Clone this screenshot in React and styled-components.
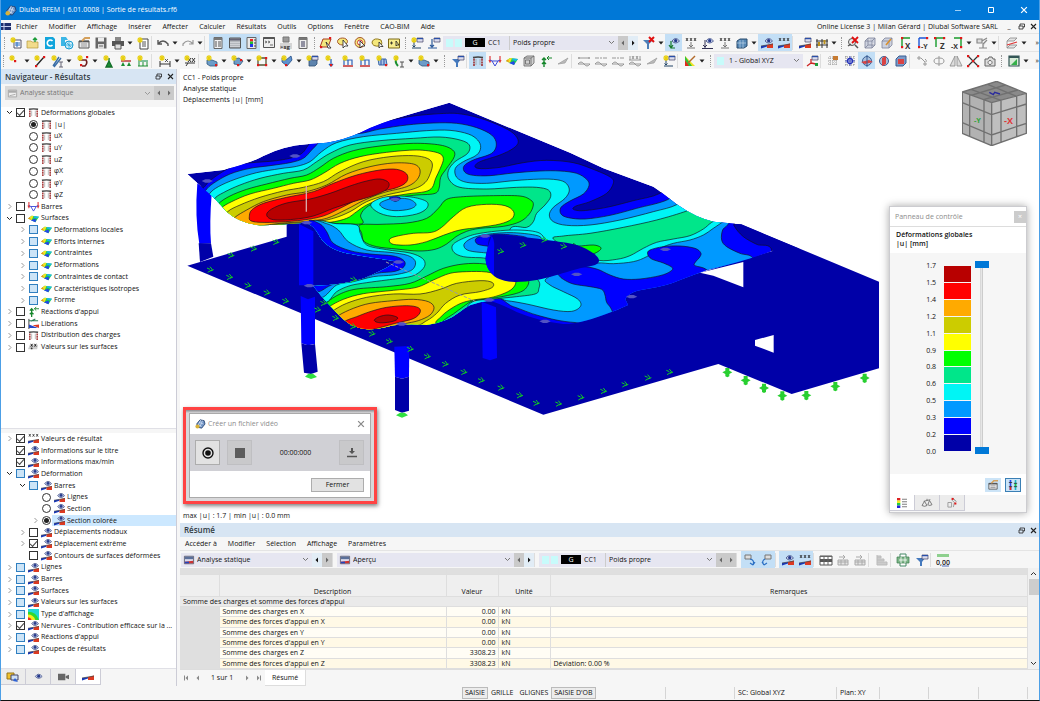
import React from 'react';
import styled, { createGlobalStyle, css } from 'styled-components';

const GlobalStyle = createGlobalStyle`
    * {
        box-sizing: border-box;
    }
    body {
        margin: 0;
        font-family: "Open Sans", "Noto Sans", sans-serif;
        font-size: 7px;
        font-weight: 500;
        line-height: 10px;
        color: #111;
    }
    button, select, input {
        margin: 0;
        padding: 0;
        font: inherit;
        color: inherit;
    }
`;

const Window = styled.div`
    display: flex;
    flex-direction: column;
    height: 100vh;
    overflow: hidden;
    background: #f6f6f6;
    border: solid #4c9fe6;
    border-width: 0 1px;
    border-bottom: 1px solid #111;
`;

const TitleBar = styled.header`
    display: flex;
    align-items: center;
    gap: 3px;
    height: 20px;
    padding-left: 4px;
    flex-shrink: 0;
    background: #0078d7;
    color: white;
`;

const Spacer = styled.div`
    flex: 1;
`;

const WindowButton = styled.button`
    display: grid;
    place-items: center;
    flex-shrink: 0;
    width: ${({ $small }) => ($small ? '12px' : '30px')};
    height: ${({ $small }) => ($small ? '10px' : '20px')};
    border: none;
    background: transparent;
`;

const DocumentButtons = styled.div`
    display: flex;
    margin-left: -6px;
`;

const MenuBar = styled.nav`
    display: flex;
    align-items: center;
    flex-shrink: 0;
    gap: ${({ $gap }) => $gap || '11px'};
    height: 13px;
    padding-left: ${({ $inset }) => $inset || '0'};
    white-space: nowrap;
`;

const MenuItem = styled.button`
    border: none;
    background: transparent;
`;

const Flag = styled.svg`
    width: 10px;
    height: 7px;
    margin-right: -6px;
`;

const ToolRow = styled.div`
    display: flex;
    align-items: center;
    flex-shrink: 0;
    height: 18px;
    border-top: 1px solid #e4e4e4;
    overflow: hidden;
`;

const ToolButton = styled.button`
    display: grid;
    place-items: center;
    flex-shrink: 0;
    width: 17px;
    height: 17px;
    border: none;
    background: ${({ $active }) => ($active ? '#c3dff6' : 'transparent')};
`;

const CaretButton = styled.button`
    display: grid;
    place-items: center;
    flex-shrink: 0;
    width: 8px;
    height: 16px;
    border: none;
    background: transparent;
`;

const Gap = styled.span`
    flex-shrink: 0;
    width: ${({ $width }) => $width}px;
    height: 14px;
    border-left: ${({ $line }) => ($line ? '1px solid #ddd' : 'none')};
`;

const Grip = styled.span`
    flex-shrink: 0;
    width: ${({ $width }) => $width}px;
    height: 14px;
    display: grid;
    place-items: center;
    &::before {
        content: '';
        height: 12px;
        border-left: 1px dotted #999;
    }
`;

const Combo = styled.div`
    display: flex;
    align-items: center;
    flex-shrink: 0;
    width: ${({ $width }) => $width};
    height: 14px;
    padding: 0 3px;
    gap: 3px;
    background: ${({ $muted }) => ($muted ? '#d9d9d9' : '#e6e6f1')};
    color: ${({ $muted }) => ($muted ? '#777' : '#111')};
`;

const Select = styled.select`
    flex: 1;
    min-width: 0;
    appearance: none;
    border: none;
    background: transparent;
    opacity: 1;
    &:disabled {
        color: #777;
    }
`;

const Swatch = styled.span`
    width: 7px;
    height: 8px;
    background: #c8fbfb;
    margin-right: ${({ $end }) => ($end ? '2px' : '-1px')};
`;

const CaseTag = styled.span`
    width: 20px;
    height: 9px;
    background: black;
    color: white;
    text-align: center;
    line-height: 9px;
    margin-left: -2px;
`;

const CaseName = styled.span`
    width: 22px;
    height: 14px;
    line-height: 14px;
    border-right: 1px solid #ccc;
`;

const StepButton = styled.button`
    display: grid;
    place-items: center;
    flex-shrink: 0;
    width: 10px;
    height: 14px;
    border: none;
    background: ${({ $dim }) => ($dim ? '#cacaca' : '#e2edf6')};
`;

const Body = styled.div`
    display: flex;
    flex: 1;
    min-height: 0;
`;

const Navigator = styled.aside`
    display: flex;
    flex-direction: column;
    width: 176px;
    flex-shrink: 0;
    border-right: 1px solid #ccccd6;
`;

const PanelTitle = styled.h2`
    display: flex;
    align-items: center;
    flex-shrink: 0;
    height: ${({ $height }) => $height};
    margin: 0;
    padding-left: 4px;
    background: #d7e5f3;
    color: #333c44;
    font-size: 8px;
    font-weight: 600;
`;

const ComboRow = styled.div`
    display: flex;
    padding: 2px 2px 7px 4px;
`;

const TreePane = styled.div`
    flex: ${({ $grow }) => ($grow ? '1' : 'none')};
    padding: 0 0 ${({ $grow }) => ($grow ? '0' : '13px')} 3px;
    margin-bottom: ${({ $grow }) => ($grow ? '4px' : '0')};
    background: white;
    min-height: 0;
    border-bottom: 1px solid #e0e0e6;
`;

const Tree = styled.ul`
    display: grid;
    grid-template-columns: minmax(0, 1fr);
    grid-auto-rows: 1fr;
    height: ${({ $height }) => $height};
    margin: 0;
    padding: 0;
    list-style: none;
`;

const TreeRow = styled.li`
    display: flex;
    align-items: center;
    min-height: 0;
    padding-left: ${({ $level }) => $level * 13}px;
`;

const Twisty = styled.button`
    display: grid;
    place-items: center;
    flex-shrink: 0;
    width: 10px;
    height: 10px;
    margin-right: 2px;
    border: none;
    background: transparent;
`;

const Tick = styled.input`
    appearance: none;
    flex-shrink: 0;
    display: grid;
    place-items: center;
    width: 9px;
    height: 9px;
    border: 1px solid ${({ $mixed }) => ($mixed ? '#2f7fc0' : '#333')};
    border-radius: ${({ type }) => (type === 'radio' ? '50%' : '0')};
    background: ${({ $mixed }) => ($mixed ? '#cce4f7' : 'white')};
    ${({ type }) =>
        type === 'radio'
            ? css`
                  &:checked::after {
                      content: '';
                      width: 5px;
                      height: 5px;
                      border-radius: 50%;
                      background: #222;
                  }
              `
            : css`
                  &:checked::after {
                      content: '';
                      width: 6px;
                      height: 3px;
                      margin-bottom: 2px;
                      border: solid #444;
                      border-width: 0 0 1px 1px;
                      transform: rotate(-48deg);
                  }
              `}
`;

const TreeLabel = styled.label`
    display: flex;
    align-items: center;
    gap: 2px;
    flex: 1;
    min-width: 0;
    height: 11px;
    margin-left: 1px;
    padding-left: 2px;
    white-space: nowrap;
    background: ${({ $selected }) => ($selected ? '#cce8ff' : 'transparent')};
    svg {
        flex-shrink: 0;
    }
`;

const NavTabs = styled.div`
    display: flex;
    height: 17px;
    flex-shrink: 0;
`;

const NavTab = styled.button`
    display: grid;
    place-items: center;
    width: 25px;
    height: 16px;
    border: solid #ccccd6;
    border-width: 0 1px 1px 0;
    background: ${({ $active }) => ($active ? 'white' : '#ececec')};
`;

const Main = styled.main`
    display: flex;
    flex-direction: column;
    flex: 1;
    min-width: 0;
    margin-left: 3px;
`;

const Viewport = styled.section`
    position: relative;
    flex: 1;
    min-height: 0;
    background: white;
`;

const Model = styled.svg`
    display: block;
    width: 100%;
    height: 100%;
`;

const Caption = styled.p`
    position: absolute;
    left: 3px;
    ${({ $bottom }) => ($bottom ? 'bottom: 2px;' : 'top: 3px;')}
    margin: 0;
    line-height: 11px;
`;

const Cube = styled.svg`
    position: absolute;
    top: 12px;
    right: 12px;
    width: 65px;
    height: 65px;
`;

const ControlPanel = styled.section`
    position: absolute;
    top: 137px;
    right: 12px;
    width: 138px;
    background: #f6f6f6;
    border: 1px solid #ccccd0;
    box-shadow: 0 0 8px rgba(0, 0, 0, 0.35);
`;

const ControlTitle = styled.h2`
    display: flex;
    align-items: center;
    justify-content: space-between;
    height: 20px;
    margin: 0;
    padding-left: 5px;
    background: white;
    border-bottom: 1px solid #ddd;
    color: #8c8c8c;
    font-size: 7px;
    font-weight: 500;
`;

const DimClose = styled.button`
    width: 12px;
    height: 12px;
    border: none;
    background: #ccc;
    color: white;
    line-height: 10px;
`;

const ControlHead = styled.div`
    height: 26px;
    padding: 3px 6px;
    background: white;
    font-weight: 600;
    line-height: 9px;
`;

const Legend = styled.div`
    display: flex;
    height: 221px;
    padding-top: 8px;
    padding-left: 26px;
`;

const ScaleValues = styled.ol`
    display: flex;
    flex-direction: column;
    justify-content: space-between;
    width: 20px;
    height: 196px;
    margin: 0;
    padding: 0;
    list-style: none;
    text-align: right;
`;

const ScaleBars = styled.div`
    display: grid;
    grid-auto-rows: 1fr;
    gap: 1px;
    width: 27px;
    height: 185px;
    margin: 5px 4px 0 8px;
`;

const ScaleBar = styled.span`
    background: ${({ $color }) => $color};
`;

const Sliders = styled.div`
    display: grid;
    width: 14px;
    height: 193px;
    background: linear-gradient(90deg, transparent 5px, #ccc 5px, #e6e6e6 6px, #e6e6e6 7px, #ccc 7px, #ccc 8px, transparent 8px);
`;

const Slider = styled.input`
    grid-area: 1 / 1;
    appearance: none;
    writing-mode: vertical-lr;
    direction: rtl;
    width: 14px;
    height: 193px;
    background: transparent;
    pointer-events: none;
    &::-webkit-slider-thumb {
        appearance: none;
        width: 14px;
        height: 7px;
        background: #0078d7;
        pointer-events: auto;
    }
`;

const ControlActions = styled.div`
    display: flex;
    justify-content: flex-end;
    align-items: center;
    gap: 4px;
    height: 21px;
    padding-right: 5px;
    background: white;
`;

const ControlAction = styled.button`
    display: grid;
    place-items: center;
    width: 16px;
    height: 14px;
    border: ${({ $framed }) => ($framed ? '1px solid #3a7fb5' : 'none')};
    background: #cce4f7;
`;

const Callout = styled.div`
    position: absolute;
    left: 3px;
    bottom: 19px;
    width: 194px;
    padding: 3px;
    border: 3px solid #ff4343;
    background: linear-gradient(#8c8c90, #d8d8da 3px, #d8d8da);
    box-shadow: 1px 2px 4px rgba(0, 0, 0, 0.5);
`;

const Dialog = styled.section`
    background: white;
    border: 1px solid #aaa;
`;

const DialogTitle = styled.h2`
    display: flex;
    align-items: center;
    gap: 3px;
    height: 20px;
    margin: 0;
    padding: 0 3px 0 5px;
    color: #8c8c8c;
    font-size: 7px;
    font-weight: 500;
`;

const Recorder = styled.div`
    display: flex;
    align-items: center;
    gap: 7px;
    height: 37px;
    padding: 0 6px 0 5px;
    background: #d0d0d5;
`;

const RecordButton = styled.button`
    display: grid;
    place-items: center;
    width: 25px;
    height: 25px;
    border: 1px solid ${({ disabled }) => (disabled ? '#bfbfc2' : '#adadad')};
    background: ${({ disabled }) => (disabled ? '#c9c9cb' : '#e2e2e2')};
`;

const Clock = styled.output`
    flex: 1;
    text-align: center;
`;

const DialogFooter = styled.div`
    display: flex;
    justify-content: flex-end;
    padding: 7px 6px 5px;
`;

const CloseButton = styled.button`
    width: 53px;
    height: 14px;
    border: 1px solid #adadad;
    background: #e2e2e2;
`;

const Summary = styled.section`
    display: flex;
    flex-direction: column;
    flex-shrink: 0;
`;

const TableArea = styled.div`
    display: flex;
    height: 102px;
    border-bottom: 1px solid #ddd;
`;

const Table = styled.table`
    flex: 1;
    height: 101px;
    border-collapse: collapse;
    table-layout: fixed;
    background: #fffbf0;
    th, td {
        padding: 0 3px;
        border: solid #dedede;
        border-width: 0 1px 1px 0;
        line-height: 9px;
        white-space: nowrap;
        font-weight: 500;
        text-align: left;
    }
    thead th {
        height: 22px;
        background: #efefef;
        text-align: center;
        vertical-align: bottom;
    }
`;

const StripRow = styled.tr`
    && td {
        height: 6px;
        background: #dfdfdf;
        line-height: 4px;
    }
`;

const GroupRow = styled.tr`
    && th {
        background: #eaeaea;
    }
`;

const DataRow = styled.tr`
    background: ${({ $alt }) => ($alt ? '#fff9e6' : '#fffdf5')};
    && td:first-child {
        background: #dfdfdf;
        border-bottom-color: #dfdfdf;
    }
    && td:nth-child(3) {
        text-align: right;
        padding-right: 2px;
    }
`;

const ScrollBar = styled.div`
    display: flex;
    flex-direction: column;
    align-items: center;
    width: 11px;
    background: #f1f1f1;
`;

const ScrollButton = styled.button`
    display: grid;
    place-items: center;
    width: 11px;
    height: 11px;
    border: none;
    background: transparent;
`;

const ScrollThumb = styled.div`
    width: 10px;
    height: 16px;
    background: #cdcdcd;
`;

const Pager = styled.div`
    display: flex;
    align-items: center;
    height: 16px;
    padding-left: 1px;
`;

const PageCount = styled.span`
    padding: 0 8px;
`;

const SheetTab = styled.button`
    align-self: flex-start;
    width: 41px;
    height: 16px;
    margin-left: 2px;
    border: solid #ddd;
    border-width: 0 1px 1px 0;
    background: white;
`;

const StatusBar = styled.footer`
    display: flex;
    align-items: center;
    flex-shrink: 0;
    height: 14px;
    padding-left: 461px;
    white-space: nowrap;
`;

const StatusToggle = styled.button`
    height: 12px;
    padding: 0 2px;
    border: 1px solid ${({ $on }) => ($on ? '#bbb' : 'transparent')};
    background: ${({ $on }) => ($on ? '#ececec' : 'transparent')};
`;

const StatusCell = styled.span`
    width: ${({ $width }) => $width};
    height: 12px;
    padding-left: 3px;
    border-left: 1px solid #d5d5d5;
    line-height: 12px;
`;

const sun = <path d="M3 0v6M0 3h6M1 1l4 4M5 1l-4 4" stroke="#e8cf10" strokeWidth="1.200" />;
const win = <g><path d="M6 1h6v4h-6z" fill="#dde" stroke="#446" strokeWidth=".7" /><path d="M6 1h6v1.2h-6z" fill="#2a4fa8" /></g>;
const eye = <g><path d="M4 4q3.500-5 7.500 0q-4 4-7.500 0z" fill="#c3cdea" stroke="#4c5b8e" strokeWidth=".9" /><circle cx="7.700" cy="3.700" r="1.600" fill="#263a8c" /></g>;
const wedge = <g><path d="M0 11.500V9L6 8v1.500z" fill="#1838b8" /><path d="M6 8l6-1.500V11H6z" fill="#dc3a22" /><path d="M0 9L12 7" stroke="#444" strokeWidth=".7" /></g>;
const dots = <path d="M1 1l2 3M3 1L1 4M5 1l2 3M7 1L5 4M9 1l2 3M11 1L9 4" stroke="#222" strokeWidth=".8" />;
const node = (x, y) => <rect x={x} y={y} width="2.200" height="2.200" fill="#e01818" />;

const glyphs = {
    logo: <g><path d="M2 6l4-5 5 1 1 4-4 5-4-1z" fill="#6f93c5" stroke="#24406e" /><path d="M5 4l5 2M4 7l4 2M7 1l-3 6M9 2L6 9" stroke="#dfe9f7" strokeWidth=".8" /><circle cx="3" cy="9" r="2.500" fill="#d8b13a" /></g>,
    newModel: <g><path d="M4 3h7v8H4z" fill="#fff" stroke="#556" /><path d="M5 6h5M5 8h5M7 5v5" stroke="#2f6fc0" />{sun}</g>,
    open: <g><path d="M0 4h4l1 1h6v6H0z" fill="#f2dc8c" stroke="#b59a3a" strokeWidth=".7" /><path d="M8 5V1M6 3l2-2 2 2" fill="none" stroke="#1d9d3a" strokeWidth="1.400" /></g>,
    cloud: <g><path d="M1 0h8l2 2v10H1z" fill="#12a5dc" /><path d="M8.500 4a3 3 0 1 0 0 4" fill="none" stroke="#fff" strokeWidth="1.600" /></g>,
    globe: <g><path d="M0 0h5l2 3H0zM0 3h4v6H0z" fill="#3cb6e6" /><circle cx="8" cy="8" r="4" fill="#cdeefa" stroke="#1a9dd4" /><path d="M4 8h8M8 4v8M5.500 5.500l5 5" stroke="#1a9dd4" strokeWidth=".7" /></g>,
    card: <g><path d="M1 4h10v7H1z" fill="#e8e8ea" stroke="#555" /><path d="M1 4.500h10" stroke="#555" strokeWidth="1.600" /><path d="M3 7h6M3 9h6" stroke="#999" /><path d="M4 4L7 1h5" stroke="#d4a05c" strokeWidth="1.800" fill="none" /></g>,
    save: <g><path d="M.5.5h11v11H.5z" fill="#666" /><path d="M3 .5h6v4H3z" fill="#eee" /><path d="M3 7h6v5H3z" fill="#ddd" /><path d="M4 9h4" stroke="#666" /></g>,
    print: <g><path d="M3 0h6v4H3z" fill="#888" /><path d="M0 4h12v5H0z" fill="#555" /><path d="M3 7h6v5H3z" fill="#ddd" stroke="#555" /></g>,
    report: <g><path d="M3 2h8v10H3z" fill="#fff" stroke="#444" /><path d="M5 5h4M5 7h4M5 9h4" stroke="#555" />{sun}</g>,
    undo: <path d="M1 3v4h4M1 7q5-6 10 0v2" fill="none" stroke="#555" strokeWidth="1.400" />,
    redo: <path d="M11 3v4H7M11 7Q6 1 1 7v2" fill="none" stroke="#999" strokeWidth="1.200" />,
    panelL: <g><path d="M2 .5h8v11H2z" fill="#f2f2f2" stroke="#666" /><path d="M2 .5h8V3H2z" fill="#777" /><path d="M3 5h2M3 7h2M3 9h2M6 5h3M6 7h3M6 9h3" stroke="#555" /></g>,
    panelW: <g><path d="M.5 1h11v10H.5z" fill="#b4b8bd" stroke="#555" /><path d="M1 1.500h10v2H1z" fill="#667" /><path d="M1 5.500h10M1 7.500h10M1 9.500h10" stroke="#dfe3e8" strokeWidth=".6" /></g>,
    panelC: <g><path d="M1 .5h9v11H1z" fill="#e8e8e8" stroke="#666" /><path d="M4 2h3v2.500H4z" fill="#e22" /><path d="M4 4.500h3V7H4z" fill="#2b3" /><path d="M4 7h3v3H4z" fill="#23e" /><path d="M8 3h2M8 6h2M8 9h2" stroke="#444" /></g>,
    terminal: <g><path d="M.5.500h11v10H.5z" fill="#eee" stroke="#555" /><path d="M.5 1h11" stroke="#555" strokeWidth="2" /><path d="M2 4l2 1-2 1M5 4l2 1-2 1M7 8h3" fill="none" stroke="#333" strokeWidth=".7" /></g>,
    sg: <g><path d="M3 0h6v5H3z" fill="#999" stroke="#777" /><path d="M0 6h12v6H0z" fill="#d5d5d5" /><text x="0" y="11.500" fontSize="6" fontWeight="700" fill="#333">&gt;sg</text></g>,
    calc: <g><path d="M2 .5h8v11H2z" fill="#eee" stroke="#666" /><path d="M2 .5h8V3H2z" fill="#777" /><path d="M4 5h4M4 7h4M4 9h4" stroke="#335" /></g>,
    para: <g><path d="M3 2h8l-3 8H0z" fill="#f2e77e" stroke="#a83b20" />{node(0, 9)}{node(9, 0)}<path d="M6 5l5 6H8z" fill="#fff" stroke="#222" strokeWidth=".8" /></g>,
    lasso: <g><ellipse cx="5.500" cy="4.500" rx="5" ry="3.500" fill="#f5e87c" stroke="#a5552a" /><path d="M6 3v8l2-2h3z" fill="#fff" stroke="#222" strokeWidth=".8" /></g>,
    ringSel: <g><circle cx="6" cy="5.500" r="5" fill="#f5e87c" stroke="#a5552a" /><circle cx="6" cy="5.500" r="2.500" fill="#fff" stroke="#c33" /><path d="M6 4v7l2-2h3z" fill="#fff" stroke="#222" strokeWidth=".8" /></g>,
    blobSel: <g><path d="M1 5q2-5 9-2q2 5-1 6q-8 1-8-4z" fill="#f5e87c" stroke="#937a20" /><path d="M8 5v6l1.500-1.500H12z" fill="#fff" stroke="#222" strokeWidth=".8" /></g>,
    boxSel: <g><path d="M.5 2h11v9H.5z" fill="#f7ec8e" stroke="#7d6a1a" /><path d="M2 6h3M3.500 4.500v3M8 4v5l1-1h2z" stroke="#222" strokeWidth=".8" /></g>,
    loadNew: <g><path d="M1 11h9M3 5v5M1.500 8.500L3 10l1.500-1.500" fill="none" stroke="#246" />{sun}{win}</g>,
    load: <g><path d="M0 11h9M4 2v8M2 8l2 2 2-2" fill="none" stroke="#2d5b9b" strokeWidth="1.200" />{win}</g>,
    filterX: <g><path d="M0 3h10L6 7v5H4V7z" fill="#4d7fb8" /><path d="M6 0l5 5M11 0L6 5" stroke="#e01010" strokeWidth="2" /></g>,
    filter: <g><path d="M0 4h9L6 8v4H4V8z" fill="#4479bd" />{win}</g>,
    eyeSup: <g><path d="M3 4v7M1 8l2 3 2-3M3 11h4" fill="none" stroke="#177a2b" strokeWidth="1.200" />{eye}</g>,
    dotsSup: <g>{dots}<path d="M6 5v5M4 8l2 2 2-2M2 11h8" stroke="#777" fill="none" /></g>,
    eyeLoad: <g><path d="M3 3v8M1 8l2 2 2-2M0 11.500h11" fill="none" stroke="#335" />{eye}</g>,
    cubeEye: <g><path d="M1 4l3-2h7v7l-3 2H1z" fill="#5587b5" stroke="#2a4c6e" /><path d="M1 6h9M4 3v8M7 3v8" stroke="#cfe1f0" strokeWidth=".6" /></g>,
    eyeWedge: <g>{wedge}{eye}</g>,
    dotsWedge: <g>{wedge}{dots}</g>,
    wedge: <g transform="translate(0 -2)">{wedge}</g>,
    camera: <path d="M0 3h8v7H0zM8.500 5.500L12 4v5L8.500 7.500z" fill="#666" />,
    eyeOnly: <g transform="translate(-1.500 2)">{eye}</g>,
    winWedge: <g>{wedge}{win}</g>,
    fence: <g><path d="M0 4h12M0 8h12" stroke="#333" /><path d="M1 2v9M6 2v9M11 2v9" stroke="#333" /><path d="M3 5v4M8.500 3v4" stroke="#b98f1c" strokeWidth="2" /></g>,
    zoomX: <g><circle cx="5" cy="5" r="3.500" fill="#eee" stroke="#555" /><path d="M8 8l3 3M1 9l3-2" stroke="#555" strokeWidth="1.500" /><path d="M5 0l6 6M11 0L5 6" stroke="#e01010" strokeWidth="1.800" /></g>,
    box: <path d="M1 4l3-3h7v7l-3 3H1zM1 4h7v7M8 4l3-3M4 1v7h7M4 8l-3 3" fill="#cdd2df" stroke="#7d8499" strokeWidth=".8" />,
    boxPen: <g><path d="M1 4l3-3h7v7l-3 3H1zM1 4h7v7M8 4l3-3" fill="#cdd2df" stroke="#7d8499" strokeWidth=".8" /><path d="M5 8l5-6" stroke="#d98f2c" strokeWidth="1.600" /></g>,
    axX: <g><path d="M2 1v9M2 1h8" stroke="#189c2b" strokeWidth="1.400" />{node(1, 9)}{node(1, 0)}<text x="5" y="11.500" fontSize="8" fontWeight="700" fill="#333">X</text></g>,
    axY: <g><path d="M2 1v9M2 1h8" stroke="#1b57d8" strokeWidth="1.400" />{node(9, 0)}{node(1, 9)}<text x="4" y="11.500" fontSize="7" fontWeight="700" fill="#333">-Y</text></g>,
    axZ: <g><path d="M2 1v9M2 1h8" stroke="#189c2b" strokeWidth="1.400" />{node(0, 0)}{node(9, 0)}<text x="6" y="11.500" fontSize="8" fontWeight="700" fill="#333">Z</text></g>,
    axNX: <g><path d="M10 1v9M10 1H3" stroke="#189c2b" strokeWidth="1.400" />{node(9, 9)}{node(9, 0)}<text x="0" y="11.500" fontSize="7" fontWeight="700" fill="#333">-X</text></g>,
    work: <path d="M1 2h5v4H1zM6 4l5-3M3 11h8M7 11V7l4-4" fill="#ddd" stroke="#888" strokeWidth="1.200" />,
    isect: <g><path d="M1 4l3-3h7l-3 3zM1 11l3-3h7l-3 3zM1 4v7" fill="#e3e3e3" stroke="#888" strokeWidth=".8" /><path d="M1 8l10-3" stroke="#d33" strokeWidth="1.200" /></g>,
    newNode: <g transform="translate(1 0)">{sun}{node(5, 5)}</g>,
    newLine: <g><path d="M2 11L10 2" stroke="#222" strokeWidth="1.300" />{sun}{node(1, 10)}{node(9, 1)}</g>,
    newBar: <g><path d="M2 11L8 2M3 12l7-9" stroke="#3a6ea8" strokeWidth="1.400" /><path d="M8 7h4M10 7v5M8 12h4" stroke="#667" />{sun}</g>,
    polyline: <g><path d="M2 5h7q2 3-1 6H5" fill="none" stroke="#702020" strokeWidth="1.600" />{sun}{node(9, 1)}{node(3, 9)}</g>,
    support: <g><path d="M6 3v4M3 12l3-6 3 6z" fill="#1c8f33" stroke="#14702a" strokeWidth="1.400" />{sun}</g>,
    supports: <g><path d="M1 6h10" stroke="#b02020" strokeWidth="1.300" /><path d="M1 11l2-4 2 4zM7 11l2-4 2 4z" fill="#1c8f33" />{sun}</g>,
    elastic: <g><path d="M1 5h10v2H1z" fill="#7dbf9b" /><path d="M2 7v4M6 7v4M10 7v4M1 11h10" stroke="#1c8f33" />{sun}</g>,
    dimension: <g><path d="M1 9h10M1 6v6M11 6v6" stroke="#333" /><path d="M6 4l3 3M9 4L6 7" stroke="#333" strokeWidth=".8" />{sun}</g>,
    dimXX: <g><path d="M1 8h10M4 3l3 4M7 3L4 7M8 3l3 4M11 3L8 7M2 11l2-3" stroke="#333" fill="none" />{sun}</g>,
    plate: <g><path d="M1 5h5l5 2v4H4L1 9z" fill="#6d9cc8" stroke="#2e587e" strokeWidth=".8" />{sun}{node(9, 9)}</g>,
    polyPlate: <g><path d="M3 4l5-1 4 3-3 4-6-1z" fill="#6d9cc8" stroke="#2e587e" strokeWidth=".8" />{sun}{node(9, 4)}{node(6, 9)}</g>,
    opening: <g><path d="M2 3h8v7H2z" fill="none" stroke="#553" strokeWidth="1.300" />{node(1, 9)}{node(9, 9)}{node(9, 2)}{sun}</g>,
    shell: <g><path d="M1 3l4 2 5-4 1 4-5 6-5-4z" fill="#5c92d0" stroke="#234b85" strokeWidth=".8" />{sun}{node(4, 9)}</g>,
    solid: <g><path d="M3 5l2-2h6v6l-2 2H3z" fill="#5d83ad" stroke="#2e4f73" strokeWidth=".8" />{sun}{win}</g>,
    loadA: <g><path d="M6 4v7M4 9l2 2 2-2" stroke="#2c62b8" strokeWidth="1.300" fill="none" />{node(5, 9)}{sun}</g>,
    loadB: <g><path d="M1 11h10" stroke="#c02020" strokeWidth="1.400" /><path d="M2 5h8v5M6 5v5M2 5v5" stroke="#2c62b8" fill="none" strokeWidth="1.200" />{sun}</g>,
    loadC: <g><path d="M2 4h8l1 6H3z" fill="#a9c4e6" stroke="#3a67a8" /><path d="M5 4v6M8 4v6" stroke="#2c52a8" />{node(9, 9)}{sun}</g>,
    loadE: <g><path d="M4 2q-3 5 1 9" stroke="#1c8f33" strokeWidth="2" fill="none" /><path d="M7 7h4M9 7v5M7 12h4" stroke="#555" />{sun}</g>,
    frame: <g><path d="M2 11V3M10 11V3" stroke="#9c2424" strokeWidth="1.500" strokeDasharray="2 .6" /><path d="M4 10V4M8 10V4" stroke="#999" strokeWidth=".7" /><path d="M1 2.500q5-1 10 0" fill="none" stroke="#444" strokeWidth="1.500" /></g>,
    moment: <g><path d="M1 1v5M11 1v5M0 5l1 2 1-2M10 5l1 2 1-2" stroke="#e23a3a" fill="none" strokeWidth="1.200" /><path d="M1 5l2 1 3 5 3-5 2-1M3 6h6" fill="none" stroke="#3b48d8" /></g>,
    surface: <g><path d="M0 6l4-3 8 1-4 6z" fill="#1fcf4a" /><path d="M0 6l4-3 2 .3L4 8z" fill="#f2e422" /><path d="M7 3.400l5 .6-2 2-4-1z" fill="#18b5ee" /><path d="M3 8l5-2 1 2-1 2z" fill="#2347e8" /><path d="M0 6l2-1.500 1 2.500z" fill="#ef8a1d" /></g>,
    solidRes: <path d="M1 3l3-2h7v7l-3 3H1zM1 3h7v8M8 3l3-2M2.500 5h4v4h-4z" fill="#cfcfcf" stroke="#666" strokeWidth=".8" />,
    react: <g><path d="M4 12V3M2 5l2-2 2 2M2 9l2-2 2 2" stroke="#15862b" strokeWidth="1.400" fill="none" /><path d="M7 3h5M9 1L7 3l2 2" stroke="#15862b" fill="none" /></g>,
    slant: <path d="M1 9L11 3L8 8z" fill="#bbb" stroke="#999" strokeWidth=".7" />,
    beamA: <path d="M0 3h12M1 2v2M11 2v2M0 9q3-4 6 0t6 0M0 9h12" fill="none" stroke="#8d8d8d" strokeWidth=".9" />,
    beamB: <path d="M0 3h4M5 3h2M8 3h4M0 9q3-4 6 0t6 0M0 9h12" fill="none" stroke="#8d8d8d" strokeWidth=".9" />,
    beamC: <path d="M1 1v4M11 1v4M0 5h12M3 1l2 3M5 1L3 4M7 1l2 3M9 1L7 4M0 9q3-4 6 0t6 0M0 9h12" fill="none" stroke="#8d8d8d" strokeWidth=".9" />,
    release: <g><path d="M1 1v11" stroke="#333" /><path d="M1 3h10M3 3.500L8 1" stroke="#2a7d56" strokeWidth="1.200" /><path d="M1 7l10 4H1z" fill="#2446c8" /><path d="M5 8l7-1v4z" fill="#dc3a22" /></g>,
    values: <g><path d="M2 3h9L10 8H0z" fill="#ccc" /><path d="M3 2l2 3M5 2L3 5M7 2l2 3M9 2L7 5" stroke="#222" /><circle cx="4" cy="7" r="1" fill="#333" /></g>,
    rainbow: <g><path d="M0 0h12v12H0z" fill="#20d8d8" /><path d="M0 12V3Q9 3 12 12z" fill="#30d930" /><path d="M0 12V6q6 0 8 6z" fill="#f5ee1c" /><path d="M0 12V9q3 0 4 3z" fill="#ee2a1c" /></g>,
    palette: <g><path d="M1 1v10h10z" fill="#f0e224" /><path d="M1 1v4l3 6h4z" fill="#2ec23c" /><path d="M1 5v6h4z" fill="#e02a1c" /><path d="M4 8l7-7" stroke="#b26a2b" strokeWidth="1.400" /></g>,
    ucs: <g><path d="M5 8V4M5 8l5 1M5 8l-4 3" stroke="#c22" strokeWidth="1.300" /><path d="M9 8h3v3H9z" fill="#1c9c3a" />{win}</g>,
    raster: <g><path d="M1 3h10M1 6h10M1 9h10M3 1v10M6 1v10M9 1v10" stroke="#888" strokeWidth=".8" strokeDasharray="1 1" /><path d="M6 1h5v4H6z" fill="#c77b32" /></g>,
    snap: <g><path d="M1 2h10M1 10h10M2 1v10M10 1v10" stroke="#888" strokeDasharray="1 1" /><circle cx="6" cy="6" r="2.500" fill="none" stroke="#2230b8" strokeWidth="1.300" /><path d="M6 1v10M1 6h10" stroke="#2230b8" strokeWidth=".8" /></g>,
    planeA: <g><circle cx="6" cy="6" r="4.500" fill="#a9c0dd" stroke="#395f95" /><path d="M0 7l8-2 4 2-8 2z" fill="#d94343" /><path d="M6 0v12" stroke="#395f95" /></g>,
    planeB: <g><circle cx="6" cy="6" r="4.500" fill="#a9c0dd" stroke="#395f95" /><path d="M4 3l4-2v8l-4 2z" fill="#d94343" /></g>,
    planeC: <g><path d="M1 4l3-3h7v7l-3 3H1z" fill="#7d9ac6" stroke="#395f95" /><path d="M3 4h6v5H3z" fill="#d94343" /></g>,
    copyPts: <path d="M2 2h2v2H2zM5 3l4 4M8 8h2v2H8zM9 4q2 1 1 3" fill="none" stroke="#999" />,
    rotate: <path d="M1 6q0-3 5-3t5 3-5 3-5-3zM6 1v10" fill="none" stroke="#999" />,
    mirror: <path d="M5 1v10H0zM7 1v10h5z" fill="#ddd" stroke="#888" strokeWidth=".8" />,
    cross: <g><path d="M1 1l10 10M11 1L1 11" stroke="#333" strokeWidth="1.200" />{node(0, 0)}{node(10, 0)}{node(0, 10)}{node(10, 10)}{node(5, 5)}</g>,
    snapshot: <path d="M1 4h3l1-2h3l1 2h2v7H1zM6 5.500a2 2 0 1 0 .1 0z" fill="#ddd" stroke="#666" />,
    view: <g><path d="M1 1h10v10H1z" fill="#d7ead7" stroke="#355" strokeWidth="1.200" /><path d="M1 1h10v2H1z" fill="#355" /><path d="M3 10l6-6v6z" fill="#35b04a" /></g>,
    sheet: <g><path d="M0 2h12v9H0z" fill="#fff" stroke="#555" /><path d="M0 5h12v3H0z" fill="#555" /><path d="M0 2.500h12M4 2v9M8 2v9" stroke="#666" /></g>,
    sheetG: <g><path d="M1 6h10v5H1z" fill="#e4e4e4" stroke="#aaa" /><path d="M1 8h10M4 6v5M8 6v5M2 3h6M6 1l2 2-2 2" stroke="#aaa" fill="none" /></g>,
    bars: <path d="M1 1v10M1 2h4v2H1M1 5h7v2H1M1 8h10v3H1" fill="#ccc" stroke="#bbb" />,
    excel: <g><path d="M3 0h6v12H3z" fill="#fff" stroke="#486" /><path d="M0 3h12v6H0z" fill="#7cb487" stroke="#3b7d4b" strokeWidth=".7" /><path d="M2 6h8M4 3v6M8 3v6" stroke="#fff" strokeWidth=".8" /></g>,
    decimals: <g><path d="M0 0h12v3H0z" fill="#8ed08e" /><text x="-1" y="10.500" fontSize="7" fontWeight="600" fill="#222">0,00</text><path d="M5 12h7" stroke="#2347a8" strokeWidth=".8" /></g>,
    back: <g><path d="M1 1h6v4H1z" fill="#ddd" stroke="#777" /><path d="M6 5q5 1 3 6M9 11L6 9M9 11l2-3" fill="none" stroke="#2a6fc4" strokeWidth="1.200" /></g>,
    forth: <g><path d="M4 1h6v4H4z" fill="#ddd" stroke="#777" /><path d="M4 5q-4 2-1 6M3 11L1 8M3 11l3-2" fill="none" stroke="#2a6fc4" strokeWidth="1.200" /></g>,
    folders: <g><path d="M0 2h7v6H0z" fill="#f0c22e" stroke="#96751a" /><path d="M4 4h7v5H4z" fill="#cfe0f5" stroke="#446" /><path d="M6 10l2-3 3 4z" fill="#2c62d8" /></g>,
    analysis: <g><path d="M.5 1.500h11v9H.5z" fill="#dde" stroke="#556" /><path d="M1 2h10v3H1z" fill="#5a6f9a" /><path d="M1 8l10-1v3H1z" fill="#c33" /><path d="M1 8h5v2H1z" fill="#24b" /></g>,
    analysisOff: <g><path d="M.5 1.500h11v9H.5z" fill="#eee" stroke="#999" /><path d="M1 2h10v3H1z" fill="#aaa" /><path d="M2 9l8-2" stroke="#999" /></g>,
    list: <g><path d="M0 0h4v3H0z" fill="#d22" /><path d="M0 3h4v3H0z" fill="#ee2" /><path d="M0 6h4v3H0z" fill="#2c4" /><path d="M0 9h4v3H0z" fill="#22d" /><path d="M6 1.500h6M6 4.500h6M6 7.500h6M6 10.500h6" stroke="#666" /></g>,
    scales: <path d="M2 4l8-2M6 1v2M3 4L0 9q3 2 6 0zM9 3L7 8q2 2 5 0z" fill="none" stroke="#666" />,
    nodesTab: <g><path d="M1 6h4v5H1zM5 3l3 3-1 5" fill="none" stroke="#999" /><path d="M6 1l4 4" stroke="#666" />{node(5, 1)}{node(8, 6)}</g>,
    tuning: <g><path d="M3 0v12" stroke="#2347e8" strokeWidth="2" /><path d="M9 0v12" stroke="#1cb5c4" strokeWidth="2" /><path d="M3 8v4" stroke="#e02a1c" strokeWidth="2" /><path d="M9 4v4" stroke="#1cc54a" strokeWidth="2" /><path d="M1 3h4M1 8h4M7 4h4M7 8h4" stroke="#333" /></g>,
};

const Icon = ({ name, size = 12 }) => (
    <svg width={size} height={size} viewBox="0 0 12 12" fill="none" aria-hidden="true" overflow="visible">{glyphs[name]}</svg>
);

const Chevron = ({ dir = 'down', color = '#555' }) => {
    const d = { down: 'M1 2l2.500 2.500L6 2', up: 'M1 5l2.500-2.500L6 5', right: 'M2.500 1L5 3.500L2.500 6' }[dir];
    return <svg width="7" height="7" viewBox="0 0 7 7" aria-hidden="true"><path d={d} fill="none" stroke={color} strokeWidth="1" /></svg>;
};

const Triangle = ({ dir, color = '#111', bar }) => (
    <svg width="6" height="6" viewBox="0 0 6 6" aria-hidden="true">
        <path d={dir === 'left' ? 'M4 .5v5L1.500 3z' : dir === 'right' ? 'M2 .5v5L4.500 3z' : 'M.5 1.500h5L3 4.500z'} fill={color} />
        {bar && <path d={dir === 'left' ? 'M.5 .5v5' : 'M5.500 .5v5'} stroke={color} />}
    </svg>
);

const Cross = ({ color = '#222', size = 7 }) => (
    <svg width={size} height={size} viewBox="0 0 7 7" aria-hidden="true"><path d="M1 1l5 5M6 1L1 6" stroke={color} strokeWidth="1.100" /></svg>
);

const Restore = () => (
    <svg width="7" height="7" viewBox="0 0 7 7" aria-hidden="true"><path d="M1 3h4v3H1zM2 3V1h4.500v3H5" fill="none" stroke="#222" strokeWidth=".8" /></svg>
);

// '|n' is a separator, ':n' a grip, 'v' a drop-down arrow, a leading '*' marks a pressed tool
const Tools = ({ items }) =>
    items.split(' ').map((item, i) => {
        if (item[0] === '|') return <Gap key={i} $width={item.slice(1)} $line={item.slice(1) > 2} />;
        if (item[0] === ':') return <Grip key={i} $width={item.slice(1)} />;
        if (item === 'v') return <CaretButton key={i} aria-label="Plus"><Triangle color="#222" /></CaretButton>;
        const name = item.replace('*', '');
        return <ToolButton key={i} aria-label={name} $active={item[0] === '*'}><Icon name={name} /></ToolButton>;
    });

const Steps = ({ left, right }) => (
    <>
        <StepButton aria-label="Précédent" $dim={!left}><Triangle dir="left" color={left ? '#111' : '#666'} /></StepButton>
        <StepButton aria-label="Suivant" $dim={!right}><Triangle dir="right" color={right ? '#111' : '#666'} /></StepButton>
    </>
);

const LoadCase = ({ width }) => (
    <Combo $width={width}>
        <Swatch />
        <Swatch $end />
        <CaseTag>G</CaseTag>
        <CaseName>CC1</CaseName>
        <Select aria-label="Cas de charge"><option>Poids propre</option></Select>
        <Chevron color="#777" />
    </Combo>
);

const resultTree = [
    [0, 'open', 'check', 'on', 'frame', 'Déformations globales'],
    [1, '', 'radio', 'on', 'frame', '|u|'],
    [1, '', 'radio', '', 'frame', 'uX'],
    [1, '', 'radio', '', 'frame', 'uY'],
    [1, '', 'radio', '', 'frame', 'uZ'],
    [1, '', 'radio', '', 'frame', 'φX'],
    [1, '', 'radio', '', 'frame', 'φY'],
    [1, '', 'radio', '', 'frame', 'φZ'],
    [0, 'shut', 'check', '', 'moment', 'Barres'],
    [0, 'open', 'check', '', 'surface', 'Surfaces'],
    [1, 'shut', 'check', 'mixed', 'surface', 'Déformations locales'],
    [1, 'shut', 'check', 'mixed', 'surface', 'Efforts internes'],
    [1, 'shut', 'check', 'mixed', 'surface', 'Contraintes'],
    [1, 'shut', 'check', 'mixed', 'surface', 'Déformations'],
    [1, 'shut', 'check', 'mixed', 'surface', 'Contraintes de contact'],
    [1, 'shut', 'check', 'mixed', 'surface', 'Caractéristiques isotropes'],
    [1, 'shut', 'check', 'mixed', 'surface', 'Forme'],
    [0, 'shut', 'check', '', 'react', "Réactions d'appui"],
    [0, 'shut', 'check', '', 'release', 'Libérations'],
    [0, 'shut', 'check', '', 'frame', 'Distribution des charges'],
    [0, 'shut', 'check', '', 'values', 'Valeurs sur les surfaces'],
];

const displayTree = [
    [0, 'shut', 'check', 'on', 'dotsWedge', 'Valeurs de résultat'],
    [0, '', 'check', 'on', 'eyeWedge', 'Informations sur le titre'],
    [0, '', 'check', 'on', 'eyeWedge', 'Informations max/min'],
    [0, 'open', 'check', 'mixed', 'eyeWedge', 'Déformation'],
    [1, 'open', 'check', 'mixed', 'eyeWedge', 'Barres'],
    [2, '', 'radio', '', 'eyeWedge', 'Lignes'],
    [2, '', 'radio', '', 'eyeWedge', 'Section'],
    [2, 'shut', 'radio', 'on', 'eyeWedge', 'Section colorée', true],
    [1, 'shut', 'check', '', 'eyeWedge', 'Déplacements nodaux'],
    [1, 'shut', 'check', 'on', 'eyeWedge', 'Déplacement extrême'],
    [1, '', 'check', '', 'eyeWedge', 'Contours de surfaces déformées'],
    [0, 'shut', 'check', 'mixed', 'eyeWedge', 'Lignes'],
    [0, 'shut', 'check', 'mixed', 'eyeWedge', 'Barres'],
    [0, 'shut', 'check', 'mixed', 'eyeWedge', 'Surfaces'],
    [0, 'shut', 'check', 'mixed', 'eyeWedge', 'Valeurs sur les surfaces'],
    [0, 'shut', 'check', 'mixed', 'rainbow', "Type d'affichage"],
    [0, 'shut', 'check', 'on', 'eyeWedge', 'Nervures - Contribution efficace sur la ...'],
    [0, 'shut', 'check', 'mixed', 'eyeWedge', "Réactions d'appui"],
    [0, 'shut', 'check', 'mixed', 'eyeWedge', 'Coupes de résultats'],
];

const TreeList = ({ id, rows, height }) => (
    <Tree $height={height}>
        {rows.map(([level, fold, kind, state, icon, text, selected], i) => (
            <TreeRow key={i} $level={level}>
                <Twisty aria-label="Développer" disabled={!fold}>
                    {fold && <Chevron dir={fold === 'open' ? 'down' : 'right'} color={fold === 'open' ? '#222' : '#999'} />}
                </Twisty>
                <Tick
                    id={`${id}-${i}`}
                    type={kind === 'radio' ? 'radio' : 'checkbox'}
                    name={kind === 'radio' ? id : undefined}
                    defaultChecked={state === 'on'}
                    $mixed={state === 'mixed'}
                />
                <TreeLabel htmlFor={`${id}-${i}`} $selected={selected}>
                    <Icon name={icon} size={11} />
                    {text}
                </TreeLabel>
            </TreeRow>
        ))}
    </Tree>
);

const scale = ['#b80000', '#ff0000', '#ffaa00', '#cccc00', '#ffff00', '#00ff00', '#00e68a', '#00f5f5', '#0099ff', '#0000ff', '#0000a8'];
const [darkRed, red, orange, olive, yellow, green, teal, cyan, azure, blue, navy] = scale;

// closed Catmull-Rom curve through "x,y x,y ..."
const curve = (list) => {
    const p = list.trim().split(/\s+/).map((pair) => pair.split(',').map(Number));
    const n = p.length;
    const at = (i) => p[(i + n) % n];
    let d = `M${p[0]}`;
    for (let i = 0; i < n; i++) {
        const [a, b, c, e] = [at(i - 1), at(i), at(i + 1), at(i + 2)];
        d += `C${b[0] + (c[0] - a[0]) / 6},${b[1] + (c[1] - a[1]) / 6} ${c[0] - (e[0] - b[0]) / 6},${c[1] - (e[1] - b[1]) / 6} ${c[0]},${c[1]}`;
    }
    return d + 'Z';
};

const slab = 'M22,252L130,240Q210,220 250,198Q310,168 380,163L440,158Q490,150 540,128Q600,98 700,70L808,38L1000,118L1170,188L1270,235L1420,290Q1450,310 1490,343Q1550,385 1600,395L1684,403L1860,476L1775,483Q1700,512 1580,540L1500,570Q1460,588 1400,597Q1345,604 1336,628L1344,645Q1310,662 1270,675Q1190,704 1150,702Q1080,695 1010,666Q960,640 928,632Q870,638 840,665Q800,697 740,705Q690,700 640,706Q590,720 560,718Q520,715 490,688Q440,640 400,588Q520,582 570,557Q630,532 648,514Q560,500 500,490Q440,475 420,440Q400,402 375,398Q300,404 240,406Q180,400 140,365Q100,320 75,300Z';

const contours = [
    [blue, '60,310 72,292 95,268 140,238 180,222 230,217 290,212 340,202 368,188 385,165 420,120 520,110 600,96 700,78 800,70 850,73 905,86 960,107 1000,130 1015,155 1000,175 960,195 900,215 885,230 905,236 960,232 1030,218 1100,211 1180,218 1245,240 1292,262 1300,280 1280,310 1230,335 1188,348 1180,358 1210,362 1280,352 1360,332 1440,310 1500,260 1690,330 1665,395 1664,410 1690,440 1730,463 1776,483 1760,620 1400,760 900,780 400,760 60,500'],
    [azure, '60,330 78,300 100,280 150,252 210,235 270,227 330,218 370,205 395,180 415,158 440,120 530,131 600,117 680,105 760,99 830,100 890,113 935,135 949,162 935,190 880,210 852,228 855,247 880,256 930,257 1000,249 1080,243 1140,243 1190,250 1220,268 1227,287 1210,312 1170,333 1143,352 1143,372 1165,383 1215,387 1290,376 1370,355 1465,328 1520,280 1690,340 1645,402 1628,420 1625,450 1640,470 1680,490 1718,503 1740,560 1400,700 1190,698 1080,678 1000,650 928,630 800,780 400,760 60,500'],
    [cyan, '70,350 88,312 115,290 165,268 230,248 300,236 350,229 390,215 425,185 470,158 550,140 650,130 740,122 810,121 865,132 893,150 902,172 890,195 850,215 826,235 830,262 860,277 920,280 990,273 1060,268 1120,268 1155,277 1168,300 1155,325 1120,352 1108,375 1120,395 1160,406 1230,405 1320,390 1420,365 1492,343 1540,300 1680,360 1625,398 1600,415 1570,435 1530,450 1480,460 1440,475 1400,500 1360,515 1300,521 1250,519 1180,530 1100,565 1110,585 1150,605 1193,627 1202,648 1175,664 1120,660 1040,642 980,632 928,629 800,740 400,760 60,500'],
    [teal, '85,370 102,328 130,308 180,285 240,265 310,250 370,240 410,215 450,190 510,165 600,152 700,145 780,141 840,150 868,165 863,190 825,215 805,242 808,270 840,292 920,297 1010,292 1070,292 1105,300 1112,320 1095,345 1070,370 1060,395 1040,412 990,418 1000,520 1072,568 1076,598 1065,612 1010,620 935,628 870,640 800,720 400,760 60,500'],
    [teal, '1120,447 1150,438 1230,430 1330,412 1430,390 1520,363 1570,340 1640,370 1595,397 1570,417 1530,437 1480,447 1430,457 1390,475 1350,497 1310,508 1255,511 1190,490'],
    [green, '1180,462 1195,468 1240,465 1262,472 1258,482 1235,493 1190,500'],
    [green, '100,375 115,342 150,318 200,298 260,282 330,265 380,255 420,232 460,205 520,182 600,168 700,160 780,165 818,180 823,200 800,235 782,262 777,295 762,311 700,316 620,328 565,348 542,375 548,400 500,402 420,398 350,400 240,412 150,400'],
    [green, '539,405 600,403 680,399 740,385 775,355 800,328 850,320 940,317 1020,318 1052,330 1060,345 1048,372 1020,395 970,409 900,415 860,424 828,440 800,462 765,478 715,483 650,477 590,470 553,455 545,430'],
    [yellow, '110,385 125,354 155,335 210,312 280,295 340,280 390,270 430,250 480,220 540,200 620,187 710,180 772,188 790,205 781,235 767,265 757,292 735,305 680,312 610,325 560,345 530,365 500,385 450,397 380,400 300,405 180,412'],
    [olive, '125,395 143,365 180,345 240,322 310,303 370,292 430,275 480,245 550,215 630,200 700,197 742,205 757,222 751,250 735,278 700,297 620,315 560,335 510,365 460,385 400,396 300,402 190,415'],
    [orange, '150,400 166,381 200,360 250,335 320,315 380,305 440,285 500,252 570,230 640,219 700,222 720,240 712,268 680,290 610,308 550,332 500,358 440,385 380,394 300,400 200,412'],
    [red, '208,380 215,360 250,340 320,322 400,305 460,280 530,255 600,240 650,238 680,252 680,275 650,293 590,308 530,330 480,355 430,378 370,390 300,396 240,397 212,392'],
    [darkRed, '260,375 275,357 320,339 390,327 450,310 510,288 560,273 600,267 626,278 620,298 580,317 520,335 460,355 400,378 340,388 280,389'],
    [yellow, '628,450 645,440 700,430 755,427 785,412 820,380 860,352 920,343 975,347 1001,365 995,387 960,402 900,412 840,420 790,436 740,455 690,465 640,463'],
    [cyan, '572,345 600,325 645,318 700,322 740,335 740,355 710,372 650,380 600,370'],
    [azure, '600,340 635,326 685,327 708,343 690,357 645,362 612,355'],
    [blue, '628,324 646,320 662,325 646,334'],
    [cyan, '1080,430 1000,420 900,430 850,445 818,465 822,487 850,500 900,503 950,503 1080,470'],
    [azure, '1080,440 1000,428 920,433 875,445 852,463 862,480 900,487 950,487 1060,465'],
    [blue, '1040,445 970,433 910,438 887,447 892,462 920,468 950,470'],
    [green, '430,660 440,638 480,612 530,597 620,590 690,580 740,558 790,535 850,522 916,522 1000,540 1043,565 1040,592 1010,610 930,626 880,632 850,650 820,672 790,692 750,730 500,760'],
    [yellow, '435,670 447,651 490,628 550,611 640,601 710,592 760,570 810,550 860,545 920,546 980,560 1007,574 992,600 940,621 880,630 840,641 800,665 772,690 730,720 480,740'],
    [olive, '445,680 460,662 500,640 560,622 640,612 720,612 780,598 830,580 900,572 936,577 937,592 900,605 840,615 797,640 770,670 740,692 690,712 500,740'],
    [orange, '465,690 478,675 520,655 570,640 640,632 700,628 745,635 762,652 750,675 715,692 670,702 600,720 500,730'],
    [red, '480,705 500,691 530,680 570,665 620,652 680,647 715,653 720,668 700,686 650,699 580,718 530,730'],
    [darkRed, '583,690 598,680 625,675 652,682 645,692 615,698 592,697'],
    [cyan, '400,398 470,401 530,405 541,430 560,465 620,479 690,489 727,505 735,525 720,545 690,560 620,570 560,578 510,587 470,605 435,637 380,600 430,500'],
    [azure, '395,398 440,401 475,420 505,455 560,480 630,487 682,496 705,512 703,532 685,545 640,555 580,560 520,575 470,585 424,623 370,600 420,500'],
    [blue, '385,398 420,402 440,425 460,460 510,482 570,492 640,498 672,512 672,530 645,544 590,550 540,568 460,583 412,606 370,590 420,500'],
    [blue, '1590,570 1578,538 1545,527 1545,518 1560,500 1562,488 1545,475 1500,468 1450,470 1410,480 1403,492 1415,507 1450,519 1477,533 1470,545 1440,557 1380,567 1330,567 1290,555 1250,537 1200,530 1135,545 1137,556 1150,568 1180,582 1230,590 1265,598 1275,615 1280,637 1297,664 1320,740 1500,680'],
];

const baseMarks = [[90, 540], [148, 562], [203, 587], [260, 609], [316, 634], [152, 497], [220, 477], [287, 457], [520, 570], [430, 640], [412, 660], [466, 685], [518, 710], [575, 732], [627, 755], [690, 778], [741, 800], [795, 823], [851, 847], [903, 872], [962, 894], [1018, 917], [1068, 940], [1135, 942], [1202, 923], [1270, 904], [1334, 884], [1403, 864], [1468, 847], [961, 485], [1028, 466], [1092, 450], [1150, 470]];
const feet = [[1642, 847], [1697, 871], [1752, 894], [1807, 917], [1879, 916], [1966, 889], [2054, 864]];
const caps = [[82, 273], [345, 198], [645, 328], [380, 398], [388, 587], [655, 516], [915, 438], [928, 630], [665, 702], [1190, 553], [1355, 620], [1456, 478], [1095, 694]];

const ResultModel = () => (
    <Model viewBox="0 -63 2577 1362" preserveAspectRatio="xMinYMin meet" role="img" aria-label="Déplacements">
        <defs><clipPath id="slab"><path d={slab} /></clipPath></defs>
        <path d="M52,280L95,312Q88,400 93,460L58,462Q44,380 52,280Z" fill={blue} />
        <path d="M56,460H93L100,500L60,516Z" fill={navy} />
        <path d="M22,527L320,440V402L420,395L700,480L900,600L1330,600L1560,548L1780,482L1660,402L1684,403L2097,575V835L1835,912L1615,822L1090,974Z" fill={navy} />
        <path d="M1560,548L1690,516V592L1600,557Z" fill="#fff" />
        <path d="M1725,750L1781,735V788L1725,767Z" fill="#fff" />
        <path d="M357,402L400,424V586H357Z" fill={blue} />
        <g clipPath="url(#slab)">
            <path d={slab} fill={navy} />
            {contours.map(([fill, points], i) => (
                <path key={i} d={curve(points)} fill={fill} stroke="#101020" strokeWidth="2" />
            ))}
        </g>
        <path d={curve('935,437 1000,438 1100,450 1190,465 1240,490 1257,510 1245,525 1200,535 1130,555 1070,570 1005,576 960,568 930,545 917,510 922,480')} fill={navy} />
        <path d="M935,437Q945,450 942,480V556Q915,535 917,505Q919,480 935,437Z" fill={blue} />
        <path d="M362,618L384,628L405,620V762L384,766L364,760Z" fill={blue} />
        <path d="M364,760Q384,768 405,762L413,845L393,852L372,848Z" fill={navy} />
        <path d="M643,770L688,768L687,860L666,866L645,860Z" fill={blue} />
        <path d="M645,860L666,866L687,860V962L666,968L645,960Z" fill={navy} />
        <path d="M905,635L948,652L951,804L930,811L908,804Z" fill={blue} />
        {caps.map(([x, y]) => <path key={x} d={`M${x - 17},${y}l11,-5h12l11,5l-11,5h-12z`} fill="#5353c4" />)}
        {baseMarks.map(([x, y], i) => (
            <path key={i} d={`M${x - 9},${y - 6}l9,4M${x},${y - 10}l7,9l-14,8M${x + 2},${y + 3}l9,-4`} fill="none" stroke="#10d020" strokeWidth="3" />
        ))}
        {feet.map(([x, y]) => (
            <path key={x} d={`M${x - 15},${y}l9,-5v-8h12v8l9,5l-9,5v7l-6,3l-6,-3v-7z`} fill="#28cf30" />
        ))}
        <path d="M375,860l10,-9h14l12,10l-18,6zM648,976l12,-8h14l10,8l-18,7z" fill="#30e040" />
        <path d="M379,288V365" stroke="#d8a8a8" strokeWidth="4" />
        <path d="M618,516L890,636" stroke="#99a" strokeWidth="3" strokeDasharray="10 5" />
    </Model>
);

const ViewCube = () => (
    <Cube viewBox="249 33 193 195" role="img" aria-label="Orientation">
        <path d="M249,66L352,34L441,70L337,98Z" fill="#8a8a8a" />
        <path d="M249,66L337,98V227L249,190Z" fill="#b2b2b2" />
        <path d="M337,98L441,70V190L337,227Z" fill="#bfbfbf" />
        <path d="M249,66L352,34L441,70L337,98ZM249,66V190L337,227L441,190V70M337,98V227M249,98L337,134L441,102M249,158L337,195L441,160M271,74V199M314,90V217M365,91V217M412,79V200M275,58L365,91M325,43L412,79M275,76L378,45M312,89L416,60" fill="none" stroke="#707070" strokeWidth="4" />
        <path d="M330,67l12,7l4,-7l16,5" fill="none" stroke="#2c2c9c" strokeWidth="4" />
        <text x="284" y="158" fontSize="22" fontWeight="700" fill="#2fa53a">-Y</text>
        <text x="374" y="161" fontSize="27" fontWeight="700" fill="#e03a3a">-X</text>
    </Cube>
);

const Panel = () => (
    <ControlPanel>
        <ControlTitle>Panneau de contrôle<DimClose aria-label="Fermer le panneau">×</DimClose></ControlTitle>
        <ControlHead>Déformations globales<br />|u| [mm]</ControlHead>
        <Legend>
            <ScaleValues>
                {['1.7', '1.5', '1.4', '1.2', '1.1', '0.9', '0.8', '0.6', '0.5', '0.3', '0.2', '0.0'].map((v) => <li key={v}>{v}</li>)}
            </ScaleValues>
            <ScaleBars>{scale.map((c) => <ScaleBar key={c} $color={c} />)}</ScaleBars>
            <Sliders>
                <Slider type="range" aria-label="Maximum" defaultValue="100" />
                <Slider type="range" aria-label="Minimum" defaultValue="0" />
            </Sliders>
        </Legend>
        <ControlActions>
            <ControlAction aria-label="Options"><Icon name="card" size={10} /></ControlAction>
            <ControlAction aria-label="Plage" $framed><Icon name="tuning" size={10} /></ControlAction>
        </ControlActions>
        <NavTabs>
            <NavTab aria-label="Échelle de couleurs" $active><Icon name="list" size={10} /></NavTab>
            <NavTab aria-label="Facteurs"><Icon name="scales" size={10} /></NavTab>
            <NavTab aria-label="Filtre"><Icon name="nodesTab" size={11} /></NavTab>
        </NavTabs>
    </ControlPanel>
);

const VideoDialog = () => (
    <Callout>
        <Dialog role="dialog" aria-labelledby="video-title">
            <DialogTitle id="video-title">
                <Icon name="logo" size={10} />Créer un fichier vidéo<Spacer />
                <WindowButton $small aria-label="Fermer la fenêtre"><Cross color="#888" size={8} /></WindowButton>
            </DialogTitle>
            <Recorder>
                <RecordButton aria-label="Enregistrer">
                    <svg width="12" height="12" viewBox="0 0 12 12" aria-hidden="true"><circle cx="6" cy="6" r="5" fill="none" stroke="#111" strokeWidth="1.400" /><circle cx="6" cy="6" r="2.800" fill="#111" /></svg>
                </RecordButton>
                <RecordButton aria-label="Arrêter" disabled>
                    <svg width="10" height="10" viewBox="0 0 10 10" aria-hidden="true"><rect width="10" height="10" fill="#5c5c5c" /></svg>
                </RecordButton>
                <Clock>00:00:000</Clock>
                <RecordButton aria-label="Télécharger" disabled>
                    <svg width="10" height="10" viewBox="0 0 10 10" aria-hidden="true"><path d="M0 8.500h10" stroke="#555" strokeWidth="1.500" /><path d="M4 0h2v3h2L5 6L2 3h2z" fill="#555" /></svg>
                </RecordButton>
            </Recorder>
            <DialogFooter><CloseButton>Fermer</CloseButton></DialogFooter>
        </Dialog>
    </Callout>
);

const summaryRows = [
    ['Somme des charges en X', '0.00', 'kN', ''],
    ["Somme des forces d'appui en X", '0.00', 'kN', ''],
    ['Somme des charges en Y', '0.00', 'kN', ''],
    ["Somme des forces d'appui en Y", '0.00', 'kN', ''],
    ['Somme des charges en Z', '3308.23', 'kN', ''],
    ["Somme des forces d'appui en Z", '3308.23', 'kN', 'Déviation: 0.00 %'],
];

const SummaryPanel = () => (
    <Summary>
        <PanelTitle $height="14px">
            Résumé<Spacer />
            <WindowButton $small aria-label="Détacher"><Restore /></WindowButton>
            <WindowButton $small aria-label="Fermer"><Cross /></WindowButton>
        </PanelTitle>
        <MenuBar $inset="5px">
            {['Accéder à', 'Modifier', 'Sélection', 'Affichage', 'Paramètres'].map((m) => <MenuItem key={m}>{m}</MenuItem>)}
        </MenuBar>
        <ToolRow>
            <Gap $width={1} />
            <Combo $width="131px">
                <Icon name="analysis" size={10} />
                <Select aria-label="Type d'analyse"><option>Analyse statique</option></Select>
                <Chevron color="#777" />
            </Combo>
            <Steps left />
            <Gap $width={5} $line />
            <Combo $width="177px">
                <Icon name="analysis" size={10} />
                <Select aria-label="Tableau"><option>Aperçu</option></Select>
                <Chevron color="#777" />
            </Combo>
            <Steps right />
            <Gap $width={5} $line />
            <LoadCase width="177px" />
            <Steps />
            <Tools items="|5 *back *forth |4 *eyeWedge *dotsWedge |4 sheet sheetG sheetG |5 bars |4 excel |2 filter |4 decimals" />
        </ToolRow>
        <TableArea>
            <Table>
                <colgroup><col width="39" /><col width="227" /><col width="52" /><col width="52" /><col /></colgroup>
                <thead>
                    <StripRow><td /><td /><td /><td /><td /></StripRow>
                    <tr><th /><th>Description</th><th>Valeur</th><th>Unité</th><th>Remarques</th></tr>
                </thead>
                <tbody>
                    <GroupRow><th colSpan="5">Somme des charges et somme des forces d'appui</th></GroupRow>
                    {summaryRows.map(([label, value, unit, note], i) => (
                        <DataRow key={label} $alt={i % 2}>
                            <td /><td>{label}</td><td>{value}</td><td>{unit}</td><td>{note}</td>
                        </DataRow>
                    ))}
                </tbody>
            </Table>
            <ScrollBar>
                <ScrollButton aria-label="Monter"><Chevron dir="up" color="#333" /></ScrollButton>
                <ScrollThumb />
                <Spacer />
                <ScrollButton aria-label="Descendre"><Chevron color="#333" /></ScrollButton>
            </ScrollBar>
        </TableArea>
        <Pager>
            <ScrollButton aria-label="Première page"><Triangle dir="left" color="#888" bar /></ScrollButton>
            <ScrollButton aria-label="Page précédente"><Triangle dir="left" color="#888" /></ScrollButton>
            <PageCount>1 sur 1</PageCount>
            <ScrollButton aria-label="Page suivante"><Triangle dir="right" color="#888" /></ScrollButton>
            <ScrollButton aria-label="Dernière page"><Triangle dir="right" color="#888" bar /></ScrollButton>
            <SheetTab>Résumé</SheetTab>
        </Pager>
    </Summary>
);

export default function App() {
    return (
        <Window>
            <GlobalStyle />
            <TitleBar>
                <Icon name="logo" size={11} />
                Dlubal RFEM | 6.01.0008 | Sortie de résultats.rf6
                <Spacer />
                <WindowButton aria-label="Réduire"><svg width="8" height="8" viewBox="0 0 8 8"><path d="M1 4.500h6" stroke="#9fd0f5" /></svg></WindowButton>
                <WindowButton aria-label="Agrandir"><svg width="8" height="8" viewBox="0 0 8 8"><path d="M1.500 1.500h5v5h-5z" fill="none" stroke="#fff" /></svg></WindowButton>
                <WindowButton aria-label="Quitter"><Cross color="#fff" size={8} /></WindowButton>
            </TitleBar>
            <MenuBar>
                <Flag viewBox="0 0 10 7" aria-hidden="true"><path d="M0 0h10v7H0z" fill="#20306e" /><path d="M0 3.500h10M3 0v7" stroke="#c8d0ee" /></Flag>
                {['Fichier', 'Modifier', 'Affichage', 'Insérer', 'Affecter', 'Calculer', 'Résultats', 'Outils', 'Options', 'Fenêtre', 'CAO-BIM', 'Aide'].map((m) => (
                    <MenuItem key={m}>{m}</MenuItem>
                ))}
                <Spacer />
                Online License 3 | Milan Gérard | Dlubal Software SARL
                <DocumentButtons>
                    <WindowButton $small aria-label="Réduire le document">_</WindowButton>
                    <WindowButton $small aria-label="Restaurer le document"><Restore /></WindowButton>
                    <WindowButton $small aria-label="Fermer le document"><Cross /></WindowButton>
                </DocumentButtons>
            </MenuBar>
            <ToolRow>
                <Tools items=":6 newModel open cloud globe card save print v report |3 undo v redo v |5 *panelL *panelW *panelC terminal sg calc :6 para lasso ringSel blobSel boxSel :6 loadNew load |1" />
                <LoadCase width="175px" />
                <Steps right />
                <Tools items="|2 filterX v *eyeSup dotsSup eyeLoad dotsSup cubeEye v *eyeWedge *dotsWedge |4 winWedge fence v :6 zoomX box boxPen |2 axX axY axZ axNX v work v |5 isect v" />
                <Spacer />»
            </ToolRow>
            <ToolRow>
                <Tools items=":4 newNode |1 v newLine newBar v |1 polyline v |1 support supports elastic |5 dimension v dimXX |5 plate v polyPlate v opening v shell v solid |2 loadA loadB loadB loadC loadE v plate v :9 filter |3 *frame moment surface solidRes react slant |4 beamA beamB beamB beamC slant loadNew |4 palette v :8" />
                <Combo $width="89px">
                    <Swatch $end />
                    <Select aria-label="Système de coordonnées"><option>1 - Global XYZ</option></Select>
                    <Chevron color="#777" />
                </Combo>
                <Tools items="ucs |4 raster snap *planeA planeB planeC |4 copyPts rotate mirror cross snapshot :7 view v" />
                <Spacer />»
            </ToolRow>
            <Body>
                <Navigator>
                    <PanelTitle $height="15px">
                        Navigateur - Résultats<Spacer />
                        <WindowButton $small aria-label="Détacher"><Restore /></WindowButton>
                        <WindowButton $small aria-label="Fermer"><Cross /></WindowButton>
                    </PanelTitle>
                    <ComboRow>
                        <Combo $width="149px" $muted>
                            <Icon name="analysisOff" size={9} />
                            <Select aria-label="Type d'analyse" disabled><option>Analyse statique</option></Select>
                            <Chevron color="#999" />
                        </Combo>
                        <Steps />
                    </ComboRow>
                    <TreePane $grow><TreeList id="results" rows={resultTree} height="246px" /></TreePane>
                    <TreePane><TreeList id="display" rows={displayTree} height="222px" /></TreePane>
                    <NavTabs>
                        <NavTab aria-label="Données"><Icon name="folders" /></NavTab>
                        <NavTab aria-label="Affichage"><Icon name="eyeOnly" size={11} /></NavTab>
                        <NavTab aria-label="Vues"><Icon name="camera" size={11} /></NavTab>
                        <NavTab aria-label="Résultats" $active><Icon name="wedge" /></NavTab>
                    </NavTabs>
                </Navigator>
                <Main>
                    <Viewport>
                        <ResultModel />
                        <Caption>CC1 - Poids propre<br />Analyse statique<br />Déplacements |u| [mm]</Caption>
                        <Caption $bottom>max |u| : 1.7 | min |u| : 0.0 mm</Caption>
                        <ViewCube />
                        <Panel />
                        <VideoDialog />
                    </Viewport>
                    <SummaryPanel />
                </Main>
            </Body>
            <StatusBar>
                <StatusToggle $on>SAISIE</StatusToggle>
                <StatusToggle>GRILLE</StatusToggle>
                <StatusToggle>GLIGNES</StatusToggle>
                <StatusToggle $on>SAISIE D'OB</StatusToggle>
                <Spacer />
                <StatusCell $width="69px" />
                <StatusCell $width="102px">SC: Global XYZ</StatusCell>
                <StatusCell $width="43px">Plan: XY</StatusCell>
                <StatusCell $width="49px" />
                <StatusCell $width="50px" />
                <StatusCell $width="49px" />
                <StatusCell $width="12px" />
            </StatusBar>
        </Window>
    );
}
